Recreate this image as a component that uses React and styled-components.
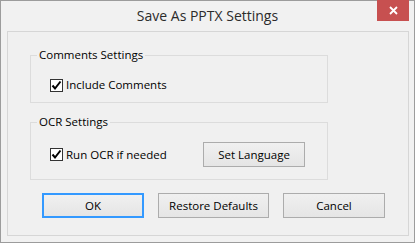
import React from "react";
import styled, { createGlobalStyle } from "styled-components";

const Global = createGlobalStyle`
  html, body { margin: 0; padding: 0; background: #f1f1f1; }
  body { font-family: "Open Sans", "Noto Sans", sans-serif; }
  * { box-sizing: border-box; }
`;

const Window = styled.div`
  width: 415px;
  height: 243px;
  border: 1px solid #9c9c9c;
  background: #f1f1f1;
  padding: 0 5px 6px 6px;
  display: flex;
  flex-direction: column;
`;

const TitleBar = styled.div`
  height: 30px;
  margin: 0 -5px 0 -6px;
  display: grid;
  grid-template-columns: 38px 1fr 38px;
  align-items: start;
`;

const Title = styled.div`
  grid-column: 2;
  text-align: center;
  font-size: 14px;
  line-height: 30px;
  color: #2b2b2b;
`;

const CloseButton = styled.div`
  grid-column: 3;
  width: 32px;
  height: 21px;
  margin: -1px 0 0 1px;
  background: #c75050;
  display: flex;
  align-items: center;
  justify-content: center;
`;

const Client = styled.div`
  flex: 1;
  border: 1px solid #d6d6d6;
  background: #f0f0f0;
  padding: 15px 0 0 22px;
  display: flex;
  flex-direction: column;
  font-size: 11.5px;
  color: #000;
`;

const Group = styled.fieldset`
  width: 298px;
  margin: 0 0 ${(p) => p.$gap}px 0;
  padding: 0 0 12px 0;
  border: 1px solid #dcdcdc;
  min-width: 0;
`;

const Legend = styled.legend`
  margin-left: 6px;
  padding: 0 2px;
  font-size: 11.5px;
  line-height: 16px;
  height: 16px;
`;

const Row = styled.div`
  display: grid;
  grid-template-columns: ${(p) => p.$cols || "auto"};
  align-items: center;
  height: ${(p) => p.$h}px;
  margin: ${(p) => p.$top}px 0 0 19px;
`;

const CheckLabel = styled.label`
  display: flex;
  align-items: center;
  gap: 3px;
  line-height: 16px;
`;

const Box = styled.span`
  width: 13px;
  height: 13px;
  border: 1px solid #333;
  background: #fff;
  display: flex;
  align-items: center;
  justify-content: center;
`;

const Button = styled.button`
  width: ${(p) => p.$w}px;
  height: 25px;
  padding: 0;
  font-family: inherit;
  font-size: 11.5px;
  color: #000;
  border: ${(p) => (p.$default ? "2px solid #3399ff" : "1px solid #acacac")};
  background: linear-gradient(#f0f0f0, #e5e5e5);
`;

const Buttons = styled.div`
  display: flex;
  gap: 14px;
  margin-left: 12px;
`;

function Check({ children }) {
  return (
    <CheckLabel>
      <Box>
        <svg width="11" height="11" viewBox="0 0 11 11">
          <path d="M1.5 5.5 L4 8.5 L9.5 1.5" fill="none" stroke="#000" strokeWidth="2" />
        </svg>
      </Box>
      {children}
    </CheckLabel>
  );
}

export default function App() {
  return (
    <>
      <Global />
      <Window>
        <TitleBar>
          <Title>Save As PPTX Settings</Title>
          <CloseButton>
            <svg width="9" height="9" viewBox="0 0 9 9">
              <path d="M1 1 L8 8 M8 1 L1 8" stroke="#fff" strokeWidth="1.8" />
            </svg>
          </CloseButton>
        </TitleBar>
        <Client>
          <Group $gap={11}>
            <Legend>Comments Settings</Legend>
            <Row $h={13} $top={14}>
              <Check>Include Comments</Check>
            </Row>
          </Group>
          <Group $gap={13}>
            <Legend>OCR Settings</Legend>
            <Row $h={25} $top={12} $cols="153px 102px">
              <Check>Run OCR if needed</Check>
              <Button $w={102}>Set Language</Button>
            </Row>
          </Group>
          <Buttons>
            <Button $w={102} $default>OK</Button>
            <Button $w={111}>Restore Defaults</Button>
            <Button $w={102}>Cancel</Button>
          </Buttons>
        </Client>
      </Window>
    </>
  );
}
